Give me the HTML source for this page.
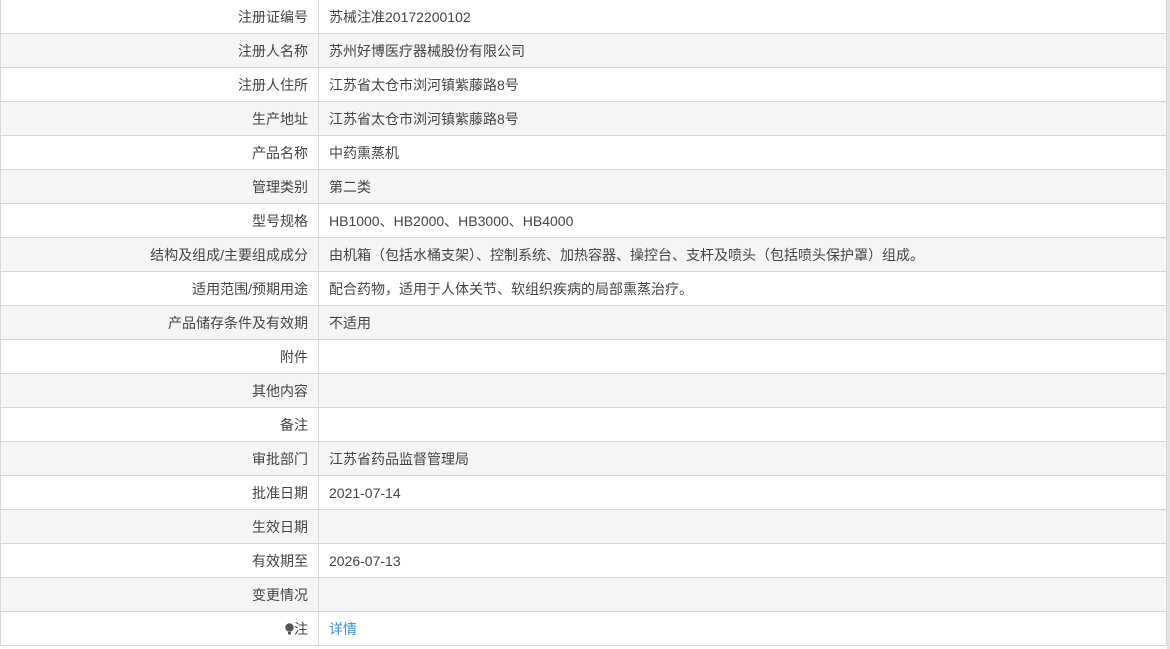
<!DOCTYPE html>
<html><head><meta charset="utf-8"><style>
html,body{margin:0;padding:0;background:#fff;width:1170px;height:649px;overflow:hidden}
body{font-family:"Liberation Sans","Noto Sans CJK SC",sans-serif;font-size:14px;color:#444}
.t{position:absolute;left:0;top:0;width:1167px}
.r{display:flex;height:33px;border-bottom:1px solid #d6d6d6;border-left:1px solid #d6d6d6;border-right:1px solid #d6d6d6;box-sizing:content-box;overflow:hidden}
.r:nth-child(even){background:#f5f5f5}
.l{width:307px;flex:none;text-align:right;padding-right:10px;border-right:1px solid #d6d6d6;line-height:34px;white-space:nowrap}
.v{padding-left:10px;line-height:34px;white-space:nowrap}
a{color:#3a8ee6;text-decoration:none}
.sb{position:absolute;right:0;top:0;width:3px;height:649px;background:#e4e4e4}
</style></head><body>
<div class="t">
<div class="r"><div class="l">注册证编号</div><div class="v">苏械注准20172200102</div></div>
<div class="r"><div class="l">注册人名称</div><div class="v">苏州好博医疗器械股份有限公司</div></div>
<div class="r"><div class="l">注册人住所</div><div class="v">江苏省太仓市浏河镇紫藤路8号</div></div>
<div class="r"><div class="l">生产地址</div><div class="v">江苏省太仓市浏河镇紫藤路8号</div></div>
<div class="r"><div class="l">产品名称</div><div class="v">中药熏蒸机</div></div>
<div class="r"><div class="l">管理类别</div><div class="v">第二类</div></div>
<div class="r"><div class="l">型号规格</div><div class="v">HB1000、HB2000、HB3000、HB4000</div></div>
<div class="r"><div class="l">结构及组成/主要组成成分</div><div class="v">由机箱（包括水桶支架）、控制系统、加热容器、操控台、支杆及喷头（包括喷头保护罩）组成。</div></div>
<div class="r"><div class="l">适用范围/预期用途</div><div class="v">配合药物，适用于人体关节、软组织疾病的局部熏蒸治疗。</div></div>
<div class="r"><div class="l">产品储存条件及有效期</div><div class="v">不适用</div></div>
<div class="r"><div class="l">附件</div><div class="v"></div></div>
<div class="r"><div class="l">其他内容</div><div class="v"></div></div>
<div class="r"><div class="l">备注</div><div class="v"></div></div>
<div class="r"><div class="l">审批部门</div><div class="v">江苏省药品监督管理局</div></div>
<div class="r"><div class="l">批准日期</div><div class="v">2021-07-14</div></div>
<div class="r"><div class="l">生效日期</div><div class="v"></div></div>
<div class="r"><div class="l">有效期至</div><div class="v">2026-07-13</div></div>
<div class="r"><div class="l">变更情况</div><div class="v"></div></div>
<div class="r"><div class="l"><svg width="9" height="12" viewBox="0 0 9 12" style="vertical-align:-1px"><ellipse cx="4.5" cy="4.5" rx="4.2" ry="4.3" fill="#555"/><rect x="3" y="9" width="3" height="2.5" fill="#555"/></svg>注</div><div class="v"><a>详情</a></div></div>
</div>
<div class="sb"></div>
</body></html>
